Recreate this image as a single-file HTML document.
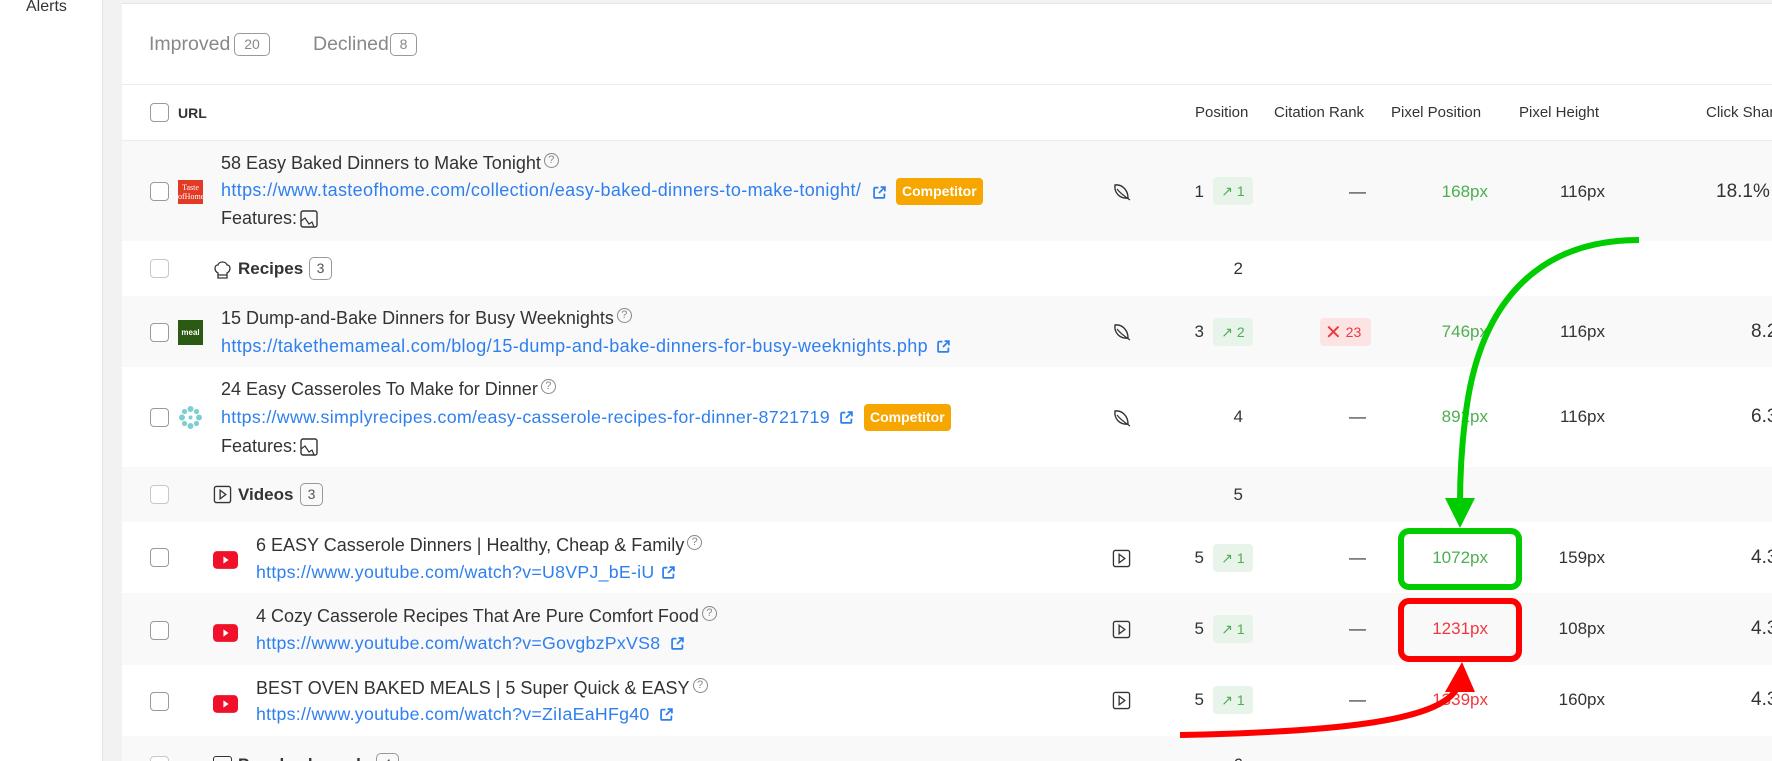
<!DOCTYPE html>
<html style="width:1772px;height:761px;overflow:hidden"><head><meta charset="utf-8">
<style>
*{margin:0;padding:0;box-sizing:border-box}
body{width:1772px;height:761px;overflow:hidden;background:#f2f2f3;font-family:"Liberation Sans",sans-serif;color:#333;position:relative}
.a{position:absolute;white-space:nowrap}
.t{line-height:24px;height:24px;font-size:17px}
.tt{font-size:18px}
.side{left:0;top:0;width:103px;height:761px;background:#fff;border-right:1px solid #e3e3e3}
.panel{left:122px;top:3px;width:1650px;height:758px;background:#fff;border-top:1px solid #e6e6e6}
.row{left:122px;width:1650px}
.g{background:#f9f9f9}
.cb{width:19px;height:19px;border:1.5px solid #9a9a9a;border-radius:4px;background:#fff}
.cbl{border-color:#c8c8c8}
.link{color:#2f7fef;font-size:18px;letter-spacing:0.35px}
.yl{font-size:17.75px;letter-spacing:0.26px}
.q{display:inline-block;width:15px;height:15px;border:1px solid #888;border-radius:50%;font-size:11px;line-height:13px;text-align:center;color:#888;vertical-align:6px;margin-left:3px;letter-spacing:0}
.comp{background:#f7a600;color:#fff;font-weight:bold;font-size:14px;border-radius:4px;height:27px;line-height:27px;padding:0 6px}
.up{background:#e8f3ea;color:#4caf50;font-size:14px;border-radius:4px;width:40px;height:28px;line-height:28px;text-align:center}
.gr{color:#4caf50}
.rd{color:#f0383f}
.cnt{border:1px solid #999;border-radius:5px;font-size:14px;text-align:center;line-height:20px;height:23px;color:#555}
.hd{font-size:15px;line-height:24px;height:24px;color:#333}
.r{text-align:right}
.cs{font-size:19px}
</style></head><body>
<div class="a side"></div>
<div class="a t" style="left:26px;top:-5px;font-size:16px">Alerts</div>
<div class="a panel"></div>

<div class="a t" style="left:149px;top:32px;color:#888;font-size:19.5px">Improved</div>
<div class="a cnt" style="left:234px;top:33px;width:36px;color:#888">20</div>
<div class="a t" style="left:313px;top:32px;color:#888;font-size:19.5px">Declined</div>
<div class="a cnt" style="left:390px;top:33px;width:27px;color:#888">8</div>
<div class="a" style="left:122px;top:84px;width:1650px;height:1px;background:#ececec"></div>

<div class="a cb" style="left:150px;top:103px"></div>
<div class="a hd" style="left:178px;top:101px;font-weight:bold;font-size:14px">URL</div>
<div class="a hd" style="left:1195px;top:101px">Position</div>
<div class="a hd" style="left:1274px;top:101px">Citation Rank</div>
<div class="a hd" style="left:1391px;top:101px">Pixel Position</div>
<div class="a hd" style="left:1519px;top:101px">Pixel Height</div>
<div class="a hd" style="left:1706px;top:101px">Click Share</div>
<div class="a" style="left:122px;top:140px;width:1650px;height:1px;background:#ececec"></div>

<div class="a row g" style="top:141px;height:100px"></div>
<div class="a row g" style="top:296px;height:71px"></div>
<div class="a row g" style="top:467px;height:55px"></div>
<div class="a row g" style="top:593px;height:72px"></div>
<div class="a row g" style="top:736px;height:25px"></div>

<svg width="0" height="0" style="position:absolute">
<defs>
<symbol id="ext" viewBox="0 0 12 12"><path d="M5 1.5H2a1 1 0 0 0-1 1v7.5a1 1 0 0 0 1 1h7.5a1 1 0 0 0 1-1V7" fill="none" stroke="#2f7fef" stroke-width="1.6"/><path d="M7 1h4v4M11 1L5.5 6.5" fill="none" stroke="#2f7fef" stroke-width="1.6"/></symbol>
<symbol id="leaf" viewBox="0 0 20 18"><path d="M4 2C11 1 17 7 17 15C9 16 3 10 4 2Z" fill="none" stroke="#333" stroke-width="1.4"/><path d="M6 6C9 10 13 13 19 17" fill="none" stroke="#333" stroke-width="1.2"/></symbol>
<symbol id="play" viewBox="0 0 20 20"><rect x="1.5" y="1.5" width="17" height="17" rx="2" fill="none" stroke="#333" stroke-width="1.4"/><path d="M7.5 5.5L13.5 10L7.5 14.5Z" fill="none" stroke="#333" stroke-width="1.4"/></symbol>
<symbol id="feat" viewBox="0 0 18 18"><rect x="1" y="1" width="16" height="16" rx="2" fill="none" stroke="#333" stroke-width="1.4"/><path d="M1 11L5 8L9 14L12 12L14 17" fill="none" stroke="#333" stroke-width="1.2"/></symbol>
<symbol id="yt" viewBox="0 0 24 17"><rect width="24" height="17" rx="4" fill="#f0102a"/><path d="M10 5L15 8.5L10 12Z" fill="#fff"/></symbol>
</defs></svg>

<!-- row1 -->
<div class="a cb" style="left:150px;top:182px"></div>
<div class="a" style="left:178px;top:180px;width:25px;height:24px;background:#e23a24;color:#fff;font-family:'Liberation Serif',serif;font-size:8px;line-height:9px;text-align:center;padding-top:3px;overflow:hidden">Taste<br>ofHome</div>
<div class="a t tt" style="left:221px;top:151px">58 Easy Baked Dinners to Make Tonight<span class="q">?</span></div>
<div class="a t link" style="left:221px;top:178px">https://www.tasteofhome.com/collection/easy-baked-dinners-to-make-tonight/</div>
<svg class="a" style="left:873px;top:186px" width="13" height="13"><use href="#ext"/></svg>
<div class="a comp" style="left:896px;top:178px">Competitor</div>
<div class="a t tt" style="left:221px;top:206px">Features:</div>
<svg class="a" style="left:300px;top:210px" width="18" height="18"><use href="#feat"/></svg>
<svg class="a" style="left:1111px;top:183px" width="20" height="18"><use href="#leaf"/></svg>
<div class="a t r" style="left:1170px;top:180px;width:34px">1</div>
<div class="a up" style="left:1213px;top:177px">↗ 1</div>
<div class="a t" style="left:1349px;top:180px">—</div>
<div class="a t r gr" style="left:1400px;top:180px;width:88px">168px</div>
<div class="a t r" style="left:1517px;top:180px;width:88px">116px</div>
<div class="a t cs" style="left:1716px;top:180px">18.1%</div>

<!-- recipes -->
<div class="a cb cbl" style="left:150px;top:259px"></div>
<svg class="a" style="left:213px;top:259px" width="19" height="21" viewBox="0 0 19 21"><path d="M5 14C1 12 1 6 5 6C6 2 13 2 14 6C18 6 18 12 14 14V19H5Z M5 16H14" fill="none" stroke="#333" stroke-width="1.3"/></svg>
<div class="a t" style="left:238px;top:257px;font-weight:bold">Recipes</div>
<div class="a cnt" style="left:309px;top:257px;width:23px">3</div>
<div class="a t r" style="left:1200px;top:257px;width:43px">2</div>

<!-- row3 -->
<div class="a cb" style="left:150px;top:323px"></div>
<div class="a" style="left:178px;top:320px;width:25px;height:25px;background:#2b5a12;color:#fff;font-size:8px;font-weight:bold;line-height:25px;text-align:center">meal</div>
<div class="a t tt" style="left:221px;top:306px">15 Dump-and-Bake Dinners for Busy Weeknights<span class="q">?</span></div>
<div class="a t link" style="left:221px;top:334px">https://takethemameal.com/blog/15-dump-and-bake-dinners-for-busy-weeknights.php</div>
<svg class="a" style="left:937px;top:340px" width="13" height="13"><use href="#ext"/></svg>
<svg class="a" style="left:1111px;top:323px" width="20" height="18"><use href="#leaf"/></svg>
<div class="a t r" style="left:1170px;top:320px;width:34px">3</div>
<div class="a up" style="left:1213px;top:318px">↗ 2</div>
<div class="a" style="left:1320px;top:318px;width:51px;height:28px;background:#fde4e4;border-radius:4px;color:#f0383f;font-size:14px;line-height:28px;padding-left:5px"><span style="font-size:20px;vertical-align:-2px">✕</span> 23</div>
<div class="a t r gr" style="left:1400px;top:320px;width:88px">746px</div>
<div class="a t r" style="left:1517px;top:320px;width:88px">116px</div>
<div class="a t cs" style="left:1751px;top:320px">8.2%</div>

<!-- row4 -->
<div class="a cb" style="left:150px;top:408px"></div>
<svg class="a" style="left:178px;top:405px" width="25" height="25" viewBox="0 0 25 25"><g fill="#7ccfd2"><circle cx="12.5" cy="4" r="3"/><circle cx="12.5" cy="21" r="3"/><circle cx="4" cy="12.5" r="3"/><circle cx="21" cy="12.5" r="3"/><circle cx="6.5" cy="6.5" r="2.6"/><circle cx="18.5" cy="6.5" r="2.6"/><circle cx="6.5" cy="18.5" r="2.6"/><circle cx="18.5" cy="18.5" r="2.6"/><circle cx="12.5" cy="12.5" r="2"/></g></svg>
<div class="a t tt" style="left:221px;top:377px">24 Easy Casseroles To Make for Dinner<span class="q">?</span></div>
<div class="a t link" style="left:221px;top:405px;font-size:17.85px;letter-spacing:0.28px">https://www.simplyrecipes.com/easy-casserole-recipes-for-dinner-8721719</div>
<svg class="a" style="left:840px;top:411px" width="13" height="13"><use href="#ext"/></svg>
<div class="a comp" style="left:864px;top:404px">Competitor</div>
<div class="a t tt" style="left:221px;top:434px">Features:</div>
<svg class="a" style="left:300px;top:438px" width="18" height="18"><use href="#feat"/></svg>
<svg class="a" style="left:1111px;top:409px" width="20" height="18"><use href="#leaf"/></svg>
<div class="a t r" style="left:1200px;top:405px;width:43px">4</div>
<div class="a t" style="left:1349px;top:405px">—</div>
<div class="a t r gr" style="left:1400px;top:405px;width:88px">892px</div>
<div class="a t r" style="left:1517px;top:405px;width:88px">116px</div>
<div class="a t cs" style="left:1751px;top:405px">6.3%</div>

<!-- videos -->
<div class="a cb cbl" style="left:150px;top:485px"></div>
<svg class="a" style="left:213px;top:485px" width="19" height="19"><use href="#play"/></svg>
<div class="a t" style="left:238px;top:483px;font-weight:bold">Videos</div>
<div class="a cnt" style="left:300px;top:483px;width:23px">3</div>
<div class="a t r" style="left:1200px;top:483px;width:43px">5</div>

<!-- row6 -->
<div class="a cb" style="left:150px;top:548px"></div>
<svg class="a" style="left:213px;top:551px" width="25" height="18"><use href="#yt"/></svg>
<div class="a t tt" style="left:256px;top:533px">6 EASY Casserole Dinners | Healthy, Cheap &amp; Family<span class="q">?</span></div>
<div class="a t link yl" style="left:256px;top:560px">https://www.youtube.com/watch?v=U8VPJ_bE-iU</div>
<svg class="a" style="left:662px;top:566px" width="13" height="13"><use href="#ext"/></svg>
<svg class="a" style="left:1112px;top:549px" width="19" height="19"><use href="#play"/></svg>
<div class="a t r" style="left:1170px;top:546px;width:34px">5</div>
<div class="a up" style="left:1213px;top:544px">↗ 1</div>
<div class="a t" style="left:1349px;top:546px">—</div>
<div class="a t r gr" style="left:1400px;top:546px;width:88px">1072px</div>
<div class="a t r" style="left:1517px;top:546px;width:88px">159px</div>
<div class="a t cs" style="left:1751px;top:546px">4.3%</div>

<!-- row7 -->
<div class="a cb" style="left:150px;top:621px"></div>
<svg class="a" style="left:213px;top:624px" width="25" height="18"><use href="#yt"/></svg>
<div class="a t tt" style="left:256px;top:604px">4 Cozy Casserole Recipes That Are Pure Comfort Food<span class="q">?</span></div>
<div class="a t link yl" style="left:256px;top:631px">https://www.youtube.com/watch?v=GovgbzPxVS8</div>
<svg class="a" style="left:671px;top:637px" width="13" height="13"><use href="#ext"/></svg>
<svg class="a" style="left:1112px;top:620px" width="19" height="19"><use href="#play"/></svg>
<div class="a t r" style="left:1170px;top:617px;width:34px">5</div>
<div class="a up" style="left:1213px;top:615px">↗ 1</div>
<div class="a t" style="left:1349px;top:617px">—</div>
<div class="a t r rd" style="left:1400px;top:617px;width:88px">1231px</div>
<div class="a t r" style="left:1517px;top:617px;width:88px">108px</div>
<div class="a t cs" style="left:1751px;top:617px">4.3%</div>

<!-- row8 -->
<div class="a cb" style="left:150px;top:692px"></div>
<svg class="a" style="left:213px;top:695px" width="25" height="18"><use href="#yt"/></svg>
<div class="a t tt" style="left:256px;top:676px">BEST OVEN BAKED MEALS | 5 Super Quick &amp; EASY<span class="q">?</span></div>
<div class="a t link yl" style="left:256px;top:702px">https://www.youtube.com/watch?v=ZiIaEaHFg40</div>
<svg class="a" style="left:660px;top:708px" width="13" height="13"><use href="#ext"/></svg>
<svg class="a" style="left:1112px;top:691px" width="19" height="19"><use href="#play"/></svg>
<div class="a t r" style="left:1170px;top:688px;width:34px">5</div>
<div class="a up" style="left:1213px;top:686px">↗ 1</div>
<div class="a t" style="left:1349px;top:688px">—</div>
<div class="a t r rd" style="left:1400px;top:688px;width:88px">1339px</div>
<div class="a t r" style="left:1517px;top:688px;width:88px">160px</div>
<div class="a t cs" style="left:1751px;top:688px">4.3%</div>

<!-- PAA (clipped) -->
<div class="a cb cbl" style="left:150px;top:756px"></div>
<div class="a" style="left:213px;top:756px;width:19px;height:19px;border:1.4px solid #333;border-radius:3px"></div>
<div class="a t" style="left:238px;top:753px;font-weight:bold">People also ask</div>
<div class="a cnt" style="left:376px;top:753px;width:23px">4</div>
<div class="a t r" style="left:1200px;top:753px;width:43px">6</div>

<svg class="a" style="left:0;top:0" width="1772" height="761">
<rect x="1401" y="531" width="118" height="56" rx="8" fill="none" stroke="#00cc00" stroke-width="6"/>
<rect x="1401" y="601" width="118" height="58" rx="8" fill="none" stroke="#ff0000" stroke-width="6"/>
<path d="M1639 240 C1540 240 1478 300 1465 420 C1460 460 1460 490 1460 505" fill="none" stroke="#00cc00" stroke-width="6"/>
<polygon points="1445,498 1475,498 1460,528" fill="#00cc00"/>
<path d="M1180 735 C1330 732 1440 722 1457 688" fill="none" stroke="#ff0000" stroke-width="6"/>
<polygon points="1445,692 1475,692 1462,662" fill="#ff0000"/>
</svg>
</body></html>
